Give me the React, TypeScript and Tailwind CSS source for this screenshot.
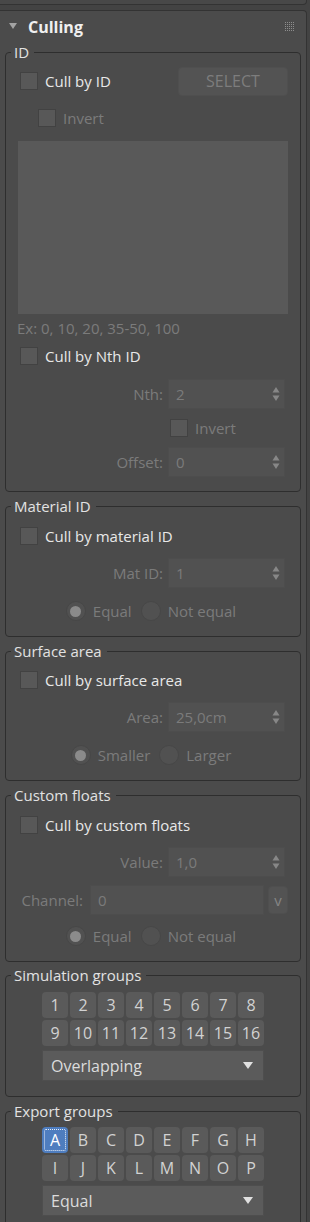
import React from "react";

const DIM = "text-[#7b7b7b]";

function Box() {
  return <span className="block w-[18px] h-[18px] shrink-0 bg-[#585858] border border-[#424242]" />;
}

function Check({ label, enabled = true, className = "" }: { label: string; enabled?: boolean; className?: string }) {
  return (
    <div className={`flex items-center h-[30px] ${className}`}>
      <Box />
      <span className={`ml-[7px] ${enabled ? "text-[#e8e8e8]" : DIM}`}>{label}</span>
    </div>
  );
}

function Arrows() {
  return (
    <svg width="8" height="16" viewBox="0 0 8 16" className="mr-[4px] shrink-0">
      <polygon points="0.5,6.5 4,1 7.5,6.5" fill="#878787" />
      <polygon points="0.5,9.5 7.5,9.5 4,15" fill="#878787" />
    </svg>
  );
}

function Spinner({ label, value, className = "" }: { label: string; value: string; className?: string }) {
  return (
    <div className={`flex items-center justify-end h-[30px] pr-[3px] ${className}`}>
      <span className={`${DIM} mr-[5px]`}>{label}</span>
      <div className="w-[117px] h-[30px] bg-[#515151] border border-[#4d4d4d] flex items-center pl-[7px]">
        <span className={`flex-1 ${DIM}`}>{value}</span>
        <Arrows />
      </div>
    </div>
  );
}

function Radio({ label, checked = false }: { label: string; checked?: boolean }) {
  return (
    <div className="flex items-center">
      <span className="w-[20px] h-[20px] rounded-full bg-[#515151] border border-[#474747] flex items-center justify-center">
        {checked && <span className="w-[11px] h-[11px] rounded-full bg-[#8b8b8b]" />}
      </span>
      <span className={`ml-[7px] ${DIM}`}>{label}</span>
    </div>
  );
}

function RadioRow({ a, b, className = "" }: { a: string; b: string; className?: string }) {
  return (
    <div className={`flex items-center justify-center gap-[9px] h-[20px] pr-[4px] ${className}`}>
      <Radio label={a} checked />
      <Radio label={b} />
    </div>
  );
}

function Group({ title, children, className = "" }: { title: string; children: React.ReactNode; className?: string }) {
  return (
    <fieldset className={`ml-[5px] w-[296px] border border-[#2e2e2e] rounded-[4px] px-[12px] ${className}`}>
      <legend className="-ml-[7px] pl-[3px] pr-[5px] leading-[20px] text-[#e2e2e2]">{title}</legend>
      {children}
    </fieldset>
  );
}

function Dropdown({ value, className = "" }: { value: string; className?: string }) {
  return (
    <div className={`mx-auto w-[222px] h-[31px] bg-[#5b5b5b] border border-[#4e4e4e] flex items-center pl-[8px] pr-[10px] ${className}`}>
      <span className="flex-1 text-[#dcdcdc] text-[16px]">{value}</span>
      <svg width="10" height="8" viewBox="0 0 10 8">
        <polygon points="0,0 10,0 5,7" fill="#e0e0e0" />
      </svg>
    </div>
  );
}

function Buttons({ items, selected }: { items: string[]; selected?: string }) {
  return (
    <div className="grid grid-cols-[repeat(8,26px)] gap-[2px] justify-center text-[16px]">
      {items.map((t) => (
        <div
          key={t}
          className={
            t === selected
              ? "h-[26px] rounded-[4px] bg-[#4e7dbf] text-white flex items-center justify-center outline-1 outline-dotted outline-[#e8eef8] outline-offset-[-3px]"
              : "h-[26px] rounded-[4px] bg-[#5a5a5a] text-[#d2d2d2] flex items-center justify-center"
          }
        >
          {t}
        </div>
      ))}
    </div>
  );
}

export default function App() {
  const nums = Array.from({ length: 16 }, (_, i) => String(i + 1));
  const letters = "ABCDEFGHIJKLMNOP".split("");
  return (
    <div className="min-h-screen w-[310px] bg-[#434343] font-['Open_Sans',sans-serif] text-[15px] leading-[20px] overflow-hidden">
      {/* previous rollout bottom */}
      <div className="w-[307px] h-[5px] bg-[#484848] border-b border-r border-[#333] rounded-br-[4px]" />
      <div className="h-[5px]" />
      {/* Culling rollout */}
      <div className="w-[307px] bg-[#4b4b4b] border-t border-r border-[#333] rounded-tr-[4px] pb-[20px]">
        <div className="h-[31px] flex items-center pl-[9px] pr-[12px]">
          <svg width="8" height="7" viewBox="0 0 8 7" className="shrink-0">
            <polygon points="0,0 8,0 4,6" fill="#a3a3a3" />
          </svg>
          <span className="ml-[11px] font-bold text-[16px] text-[#f0f0f0] flex-1">Culling</span>
          <svg width="9" height="9" viewBox="0 0 9 9" className="shrink-0 mb-[1px]">
            {[0, 2, 4, 6, 8].map((x) =>
              [0, 2, 4, 6, 8].map((y) => <rect key={`${x}-${y}`} x={x} y={y} width="1" height="1" fill="#8d8d8d" />)
            )}
          </svg>
        </div>

        <Group title="ID" className="pb-[14px]">
          <div className="flex items-center justify-between h-[30px] mt-[4px]">
            <Check label="Cull by ID" className="ml-[2px]" />
            <div className="w-[110px] h-[29px] rounded-[4px] bg-[#535353] border border-[#4f4f4f] flex items-center justify-center text-[#7d7d7d] text-[16px]">
              SELECT
            </div>
          </div>
          <Check label="Invert" enabled={false} className="ml-[20px] mt-[7px]" />
          <div className="mt-[8px] h-[173px] w-[270px] bg-[#595959]" />
          <div className={`mt-[4px] h-[20px] leading-[20px] ${DIM} -ml-[1px]`}>Ex: 0, 10, 20, 35-50, 100</div>
          <Check label="Cull by Nth ID" className="ml-[2px] mt-[3px]" />
          <Spinner label="Nth:" value="2" className="mt-[8px]" />
          <Check label="Invert" enabled={false} className="ml-[152px] mt-[4px]" />
          <Spinner label="Offset:" value="0" className="mt-[4px]" />
        </Group>

        <Group title="Material ID" className="mt-[4px] pb-[15px]">
          <Check label="Cull by material ID" className="ml-[2px] mt-[5px]" />
          <Spinner label="Mat ID:" value="1" className="mt-[7px]" />
          <RadioRow a="Equal" b="Not equal" className="mt-[13px]" />
        </Group>

        <Group title="Surface area" className="mt-[4px] pb-[15px]">
          <Check label="Cull by surface area" className="ml-[2px] mt-[4px]" />
          <Spinner label="Area:" value="25,0cm" className="mt-[7px]" />
          <RadioRow a="Smaller" b="Larger" className="mt-[13px]" />
        </Group>

        <Group title="Custom floats" className="mt-[4px] pb-[15px]">
          <Check label="Cull by custom floats" className="ml-[2px] mt-[5px]" />
          <Spinner label="Value:" value="1,0" className="mt-[7px]" />
          <div className="flex items-center justify-end h-[30px] mt-[8px]">
            <span className={`${DIM} mr-[7px]`}>Channel:</span>
            <div className={`w-[174px] h-[30px] bg-[#515151] border border-[#4d4d4d] flex items-center pl-[7px] ${DIM}`}>0</div>
            <div className="ml-[4px] w-[20px] h-[28px] rounded-[4px] bg-[#535353] border border-[#4f4f4f] flex items-center justify-center text-[#858585] text-[15px]">
              v
            </div>
          </div>
          <RadioRow a="Equal" b="Not equal" className="mt-[11px]" />
        </Group>

        <Group title="Simulation groups" className="mt-[3px] pb-[15px]">
          <div className="mt-[7px]">
            <Buttons items={nums} />
          </div>
          <Dropdown value="Overlapping" className="mt-[4px]" />
        </Group>

        <Group title="Export groups" className="mt-[4px] pb-[15px]">
          <div className="mt-[6px]">
            <Buttons items={letters} selected="A" />
          </div>
          <Dropdown value="Equal" className="mt-[4px]" />
        </Group>
      </div>
    </div>
  );
}
